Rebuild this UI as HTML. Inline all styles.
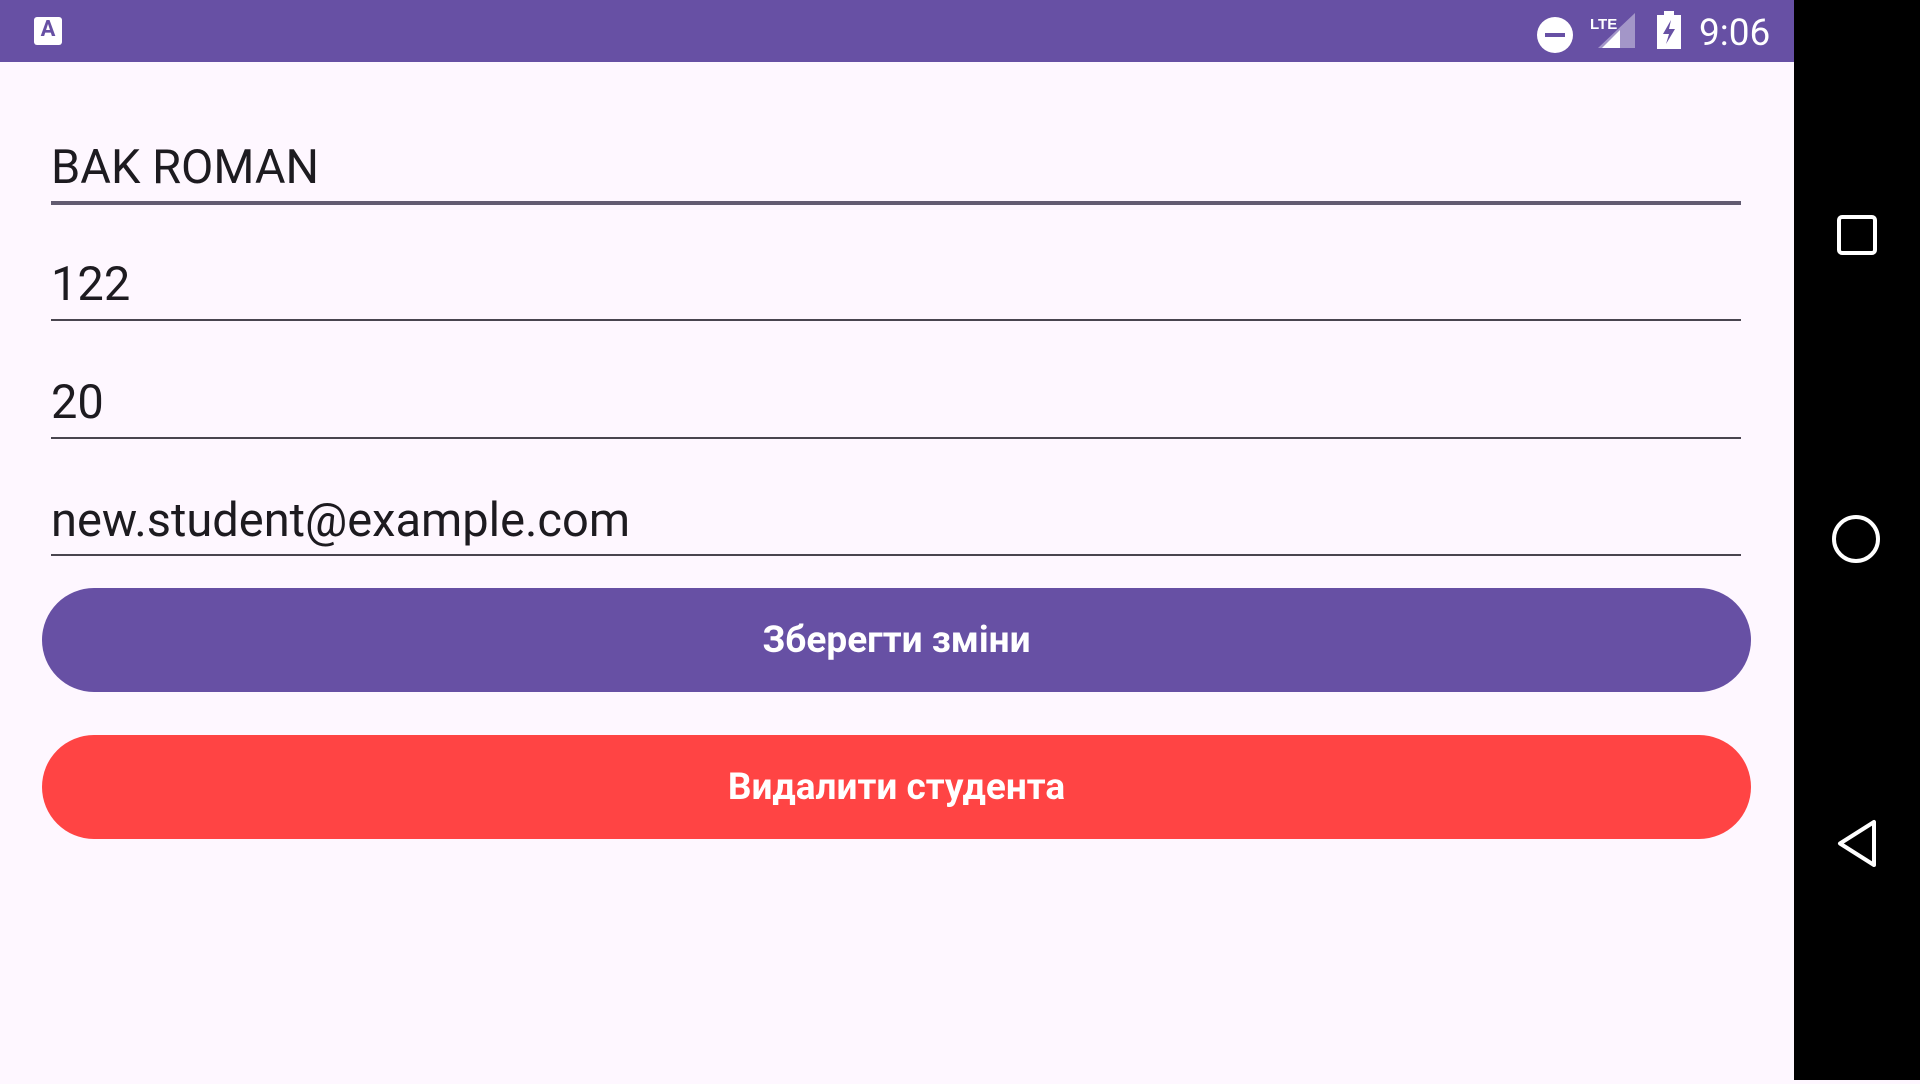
<!DOCTYPE html>
<html><head><meta charset="utf-8"><style>
*{margin:0;padding:0;box-sizing:border-box}
body{width:1920px;height:1080px;position:relative;background:#FEF7FF;font-family:"Roboto","Liberation Sans",sans-serif;overflow:hidden}
.sb{position:absolute;left:0;top:0;width:1794px;height:62px;background:#6750A4}
.nav{position:absolute;left:1794px;top:0;width:126px;height:1080px;background:#000}
.t{position:absolute;left:51px;font-size:47px;color:#1d1b20;line-height:1}
.ln{position:absolute;left:51px;width:1690px;height:2px;background:#49454f}
.btn{position:absolute;left:42px;width:1709px;height:104px;border-radius:52px;color:#fff;font-size:37px;font-weight:bold;display:flex;align-items:center;justify-content:center}
</style></head><body>
<div class="sb">
<div style="position:absolute;left:34px;top:17px;width:28px;height:28px;background:#fff;border-radius:3px;color:#6750A4;font-size:22px;font-weight:bold;text-align:center;line-height:26px">A</div>
<svg style="position:absolute;left:1530px;top:10px" width="250" height="45">
<circle cx="25" cy="25" r="18" fill="#fff"/><rect x="15" y="23" width="20" height="4" fill="#6750A4"/>
<text x="60" y="19" fill="#fff" font-size="15" font-weight="bold" font-family="Liberation Sans Narrow,Liberation Sans,sans-serif">LTE</text>
<polygon points="105,3 105,38 68,38" fill="#fff" opacity="0.4"/>
<polygon points="90,20 90,38 72,38" fill="#fff"/>
<rect x="127" y="5" width="24" height="34" fill="#fff"/><rect x="134" y="1" width="10" height="5" fill="#fff"/>
<polygon points="141,10 133,24 139,24 136,34 145,19 139,19" fill="#6750A4"/>
</svg>
<div style="position:absolute;left:1699px;top:12px;font-size:37px;color:#fff">9:06</div>
</div>
<div class="nav">
<svg width="126" height="1080">
<rect x="45" y="217" width="36" height="36" rx="3" fill="none" stroke="#fff" stroke-width="4"/>
<circle cx="62" cy="539" r="22" fill="none" stroke="#fff" stroke-width="4"/>
<polygon points="80,822 80,865 46,843.5" fill="none" stroke="#fff" stroke-width="4" stroke-linejoin="round"/>
</svg>
</div>
<div class="t" style="top:144px">BAK ROMAN</div>
<div class="ln" style="top:201px;height:4px;background:#625b71"></div>
<div class="t" style="top:261px">122</div>
<div class="ln" style="top:319px"></div>
<div class="t" style="top:379px">20</div>
<div class="ln" style="top:437px"></div>
<div class="t" style="top:497px">new.student@example.com</div>
<div class="ln" style="top:554px"></div>
<div class="btn" style="top:588px;background:#6750A4">Зберегти зміни</div>
<div class="btn" style="top:735px;background:#FF4444">Видалити студента</div>
</body></html>
